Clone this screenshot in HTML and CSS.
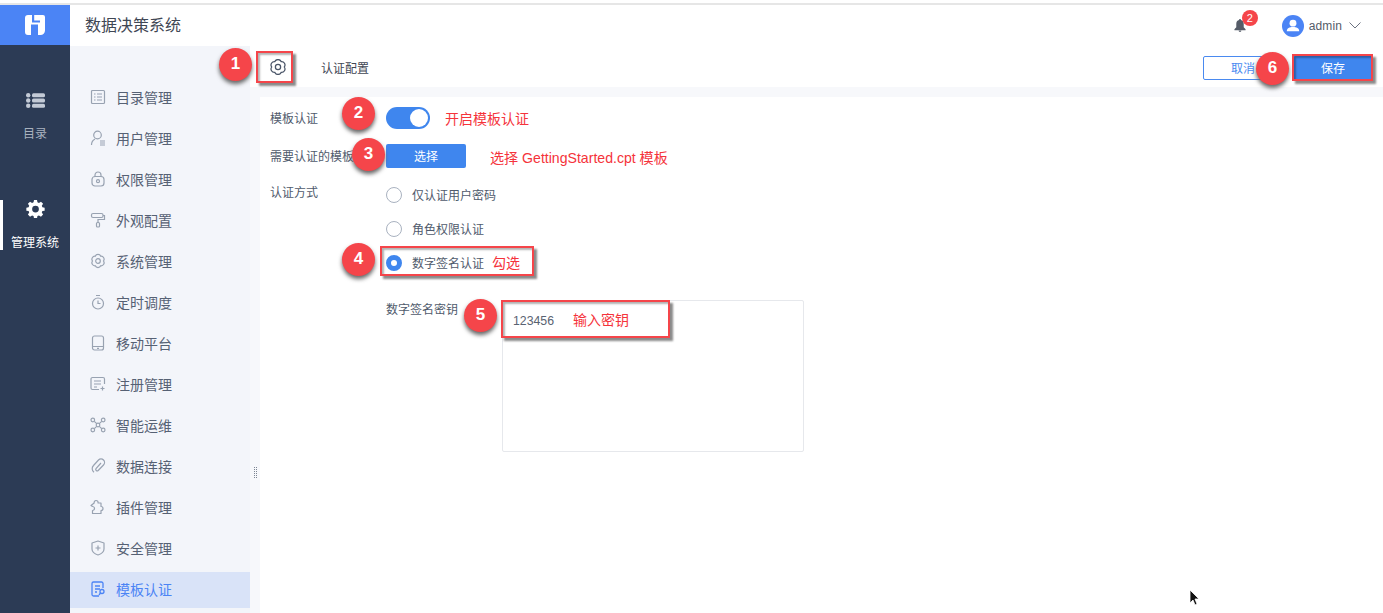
FILE: index.html
```html
<!DOCTYPE html>
<html lang="zh-CN">
<head>
  <meta charset="UTF-8" />
  <title>数据决策系统</title>
  <link rel="stylesheet" href="styles.css">
</head>
<body>
  <div class="topline"></div>
  <div class="app">
    <aside class="rail">
      <div class="logo">
        <svg width="20" height="20" viewBox="0 0 20 20"><path fill="#fff" d="M3 0h15a2 2 0 0 1 2 2v13.500a4.500 4.500 0 0 1-4.500 4.500H13V9.500H6V20H3a3 3 0 0 1-3-3V3a3 3 0 0 1 3-3z"/><path fill="#4b84f5" d="M7 0h2.200v5.500H15v2H7z"/></svg>
      </div>
      <div class="rail-item rail-dir">
        <svg width="19" height="15" viewBox="0 0 19 15" fill="#c3cad6"><circle cx="2.200" cy="2.200" r="2.200"/><circle cx="2.200" cy="7.500" r="2.200"/><circle cx="2.200" cy="12.800" r="2.200"/><rect x="6" y="0.300" width="13" height="4" rx="1.500"/><rect x="6" y="5.500" width="13" height="4" rx="1.500"/><rect x="6" y="10.700" width="13" height="4" rx="1.500"/></svg>
        <span>目录</span>
      </div>
      <div class="rail-item rail-on">
        <svg width="21" height="20" viewBox="0 0 24 24"><path fill="#fff" fill-rule="evenodd" d="M10 0h4l.6 3.100 2 .8L19.300 2.200l2.800 2.800-1.700 2.600.8 2 3 .6v4l-3 .6-.8 2 1.700 2.600-2.800 2.800-2.700-1.700-2 .8-.6 3.100h-4l-.6-3.100-2-.8-2.700 1.700-2.800-2.800 1.700-2.600-.8-2-3-.6v-4l3-.6.8-2L1.900 5 4.700 2.200l2.700 1.700 2-.8zM12 7.500a4.500 4.500 0 1 0 0 9 4.500 4.500 0 0 0 0-9z"/></svg>
        <span>管理系统</span>
      </div>
    </aside>

    <div class="right">
      <header class="header">
        <div class="title">数据决策系统</div>
        <div class="bell">
          <svg width="12" height="13" viewBox="0 0 12 14" fill="#555c68"><path d="M6 0c.7 0 1 .5 1 1 2 .5 3 2 3 4v4l2 2v1H0v-1l2-2V5c0-2 1-3.500 3-4 0-.5.300-1 1-1z"/><path d="M4.500 12.500h3a1.500 1.500 0 0 1-3 0z"/></svg>
          <span class="bell-count">2</span>
        </div>
        <div class="user">
          <svg width="22" height="22" viewBox="0 0 23 23"><circle cx="11.500" cy="11.500" r="11.500" fill="#4b84f5"/><circle cx="11.500" cy="8.500" r="3.600" fill="#fff"/><path fill="#fff" d="M5 17c0-3.500 2.800-4.500 6.500-4.500S18 13.500 18 17z"/></svg>
          <span class="user-name">admin</span>
          <svg width="12" height="7" viewBox="0 0 12 7" fill="none" stroke="#6b7280"><path d="M.5.500 6 6l5.500-5.500"/></svg>
        </div>
      </header>

      <div class="body">
        <nav class="side">
          <a class="side-item"><svg class="ico" viewBox="0 0 16 16"><rect x="1.500" y="1.500" width="13" height="13" rx="1"/><path d="M4 5h1.500M7 5h5M4 8h1.500M7 8h5M4 11h1.500M7 11h5"/></svg>目录管理</a>
          <a class="side-item"><svg class="ico" viewBox="0 0 16 16"><circle cx="7.500" cy="5" r="3.800"/><path d="M1.500 15c0-3 1.500-5 3.500-6M10 11h5M10 13h5M10 15h5"/></svg>用户管理</a>
          <a class="side-item"><svg class="ico" viewBox="0 0 16 16"><rect x="2" y="5.500" width="12" height="9.500" rx="3"/><path d="M5 5.500V4a3 3 0 0 1 6 0v1.500"/><circle cx="8" cy="10.200" r="1.500"/></svg>权限管理</a>
          <a class="side-item"><svg class="ico" viewBox="0 0 16 16"><rect x="1.500" y="1.500" width="11.500" height="4" rx="1.500"/><path d="M13 3.500h1.500v4H8v3"/><rect x="6.500" y="10.500" width="3" height="4.500" rx="1"/></svg>外观配置</a>
          <a class="side-item"><svg class="ico" viewBox="0 0 16 16"><path d="M13.500 8A3 3 0 0 1 10.750 12.760 3 3 0 0 1 5.250 12.760 3 3 0 0 1 2.500 8 3 3 0 0 1 5.250 3.240 3 3 0 0 1 10.750 3.240 3 3 0 0 1 13.500 8z"/><circle cx="8" cy="8" r="2.300"/></svg>系统管理</a>
          <a class="side-item"><svg class="ico" viewBox="0 0 16 16"><circle cx="8" cy="9.500" r="5.500"/><path d="M6 1.500h4M8 6.500v3h2.500"/></svg>定时调度</a>
          <a class="side-item"><svg class="ico" viewBox="0 0 16 16"><rect x="2.500" y="1" width="11" height="14" rx="2"/><path d="M2.500 11.500h11M7 13.300h2"/></svg>移动平台</a>
          <a class="side-item"><svg class="ico" viewBox="0 0 16 16"><path d="M14.500 8V3A1.500 1.500 0 0 0 13 1.500H2.500A1.500 1.500 0 0 0 1 3v9a1.500 1.500 0 0 0 1.500 1.500H9M4 5h7M4 8h7M4 11h3M12.500 10.500v4M10.500 12.500h4"/></svg>注册管理</a>
          <a class="side-item"><svg class="ico" viewBox="0 0 16 16"><circle cx="2.800" cy="3" r="1.800"/><circle cx="13.200" cy="3" r="1.800"/><circle cx="2.800" cy="13" r="1.800"/><circle cx="13.200" cy="13" r="1.800"/><circle cx="8" cy="8" r="1.800"/><path d="M4.300 4.300l2.400 2.400M11.700 4.300L9.300 6.700M4.300 11.700l2.400-2.400M11.700 11.700L9.300 9.300"/></svg>智能运维</a>
          <a class="side-item"><svg class="ico" viewBox="0 0 16 16"><path d="M11 5L6 10.500a1.500 1.500 0 0 0 2.200 2L13.500 7a3.500 3.500 0 0 0-5-5L3.500 7.500a4.500 4.500 0 0 0 .5 6.800"/></svg>数据连接</a>
          <a class="side-item"><svg class="ico" viewBox="0 0 16 16"><path d="M6 1.500a2 2 0 0 1 2 2.500h3v3.500a2 2 0 1 1 0 4V14.500H2.500v-3a2 2 0 1 0 0-4L1 6.500 4.200 4A2 2 0 0 1 6 1.500z" stroke-linejoin="round"/></svg>插件管理</a>
          <a class="side-item"><svg class="ico" viewBox="0 0 16 16"><path d="M8 1l6 2v6c0 3-3 5-6 6-3-1-6-3-6-6V3z" stroke-linejoin="round"/><path d="M8 5.500v5M5.500 8h5"/></svg>安全管理</a>
          <a class="side-item side-on"><svg class="ico" viewBox="0 0 16 16"><path d="M13 7V2.500A1.500 1.500 0 0 0 11.500 1h-8A1.500 1.500 0 0 0 2 2.500v11A1.500 1.500 0 0 0 3.500 15H9M5 5h5M5 8h5M5 11h2"/><circle cx="12" cy="10.500" r="2"/><path d="M10.500 12l-1.500 2"/></svg>模板认证</a>
        </nav>

        <div class="gutter"><span class="grip"></span></div>

        <section class="page">
          <div class="toolbar">
            <span class="tool-gear">
              <svg width="16" height="16" viewBox="1 1 14 14" fill="none" stroke="#4a5568" stroke-width="1.100"><path d="M13.500 8A3 3 0 0 1 10.750 12.760 3 3 0 0 1 5.250 12.760 3 3 0 0 1 2.500 8 3 3 0 0 1 5.250 3.240 3 3 0 0 1 10.750 3.240 3 3 0 0 1 13.500 8z"/><circle cx="8" cy="8" r="2.300"/></svg>
            </span>
            <span class="tool-title">认证配置</span>
            <div class="tool-btns">
              <button class="btn-cancel">取消</button>
              <button class="btn-save">保存</button>
            </div>
          </div>

          <div class="panel">
            <div class="row row-switch">
              <label class="row-label">模板认证</label>
              <span class="switch"><i></i></span>
              <span class="note note-switch">开启模板认证</span>
            </div>
            <div class="row row-choose">
              <label class="row-label">需要认证的模板</label>
              <button class="btn-choose">选择</button>
              <span class="note note-choose">选择 GettingStarted.cpt 模板</span>
            </div>
            <div class="row row-mode">
              <label class="row-label">认证方式</label>
              <div class="radios">
                <div class="radio-row"><span class="radio"></span>仅认证用户密码</div>
                <div class="radio-row"><span class="radio"></span>角色权限认证</div>
                <div class="radio-row"><span class="radio radio-on"></span>数字签名认证<span class="note note-radio">勾选</span></div>
              </div>
            </div>
            <div class="row row-key">
              <label class="key-label">数字签名密钥</label>
              <div class="key-box">123456<span class="note note-key">输入密钥</span></div>
            </div>
          </div>
        </section>
      </div>
    </div>
  </div>

  <!-- annotations drawn over the screenshot -->
  <span class="mark mark-gear"></span>
  <span class="mark mark-save"></span>
  <span class="mark mark-radio"></span>
  <span class="mark mark-key"></span>
  <span class="num num-1">1</span>
  <span class="num num-2">2</span>
  <span class="num num-3">3</span>
  <span class="num num-4">4</span>
  <span class="num num-5">5</span>
  <span class="num num-6">6</span>

  <svg class="cursor" width="11" height="17" viewBox="0 0 11 17"><path fill="#111" stroke="#fff" stroke-width=".8" d="M1 1v13l3-3 2 5 2-1-2-5h4z"/></svg>
</body>
</html>
```

FILE: styles.css
```css
* {
  box-sizing: border-box;
}
html, body {
  margin: 0;
  height: 613px;
  overflow: hidden;
}
body {
  background: #f7f8fb;
  color: #4f5a6c;
  font-family: "Noto Sans CJK SC", "Liberation Sans", sans-serif;
  font-size: 12px;
}
.topline {
  height: 5px;
  background: #fff;
  border-bottom: 2px solid #e6e6e6;
}
.app {
  display: flex;
  height: 608px;
}

/* left dark rail */
.rail {
  width: 70px;
  flex: none;
  background: #2c3b55;
}
.logo {
  height: 40px;
  background: #4b84f5;
  display: flex;
  align-items: center;
  justify-content: center;
}
.rail-item {
  display: flex;
  flex-direction: column;
  align-items: center;
  color: #aab2bf;
  line-height: 17px;
}
.rail-dir {
  margin-top: 48px;
  gap: 16px;
}
.rail-on {
  margin-top: 59px;
  height: 50px;
  color: #fff;
  gap: 15px;
  border-left: 3px solid #fff;
  padding-right: 3px;
}

.right {
  flex: 1;
  display: flex;
  flex-direction: column;
  min-width: 0;
}
.header {
  height: 41px;
  background: #fff;
  display: flex;
  align-items: center;
  padding: 0 22px 0 15px;
}
.title {
  font-size: 16px;
  color: #3f4754;
  flex: 1;
  padding-bottom: 3px;
}
.bell {
  position: relative;
  display: flex;
  margin-right: 36px;
}
.bell-count {
  position: absolute;
  left: 8px;
  top: -9px;
  width: 16px;
  height: 16px;
  border-radius: 50%;
  background: #f5454a;
  color: #fff;
  font-size: 11px;
  line-height: 16px;
  text-align: center;
  font-family: "Liberation Sans", sans-serif;
}
.user {
  display: flex;
  align-items: center;
}
.user-name {
  font-family: "Liberation Sans", sans-serif;
  font-size: 12px;
  letter-spacing: 0.100px;
  color: #555c68;
  margin: 0 7px 0 5px;
}

.body {
  flex: 1;
  display: flex;
  min-height: 0;
}
.side {
  width: 180px;
  flex: none;
  padding-top: 34px;
  background: #f3f5fa;
}
.side-item {
  display: flex;
  align-items: center;
  height: 36px;
  margin-bottom: 5px;
  padding: 0 0 2px 20px;
  gap: 10px;
  font-size: 14px;
  color: #566174;
}
.ico {
  width: 16px;
  height: 16px;
  flex: none;
  fill: none;
  stroke: #98a2b1;
  stroke-width: 1.200;
}
.side-on {
  background: #d9e3f8;
  color: #4b84f5;
}
.side-on .ico {
  stroke: #4b84f5;
  stroke-width: 1.300;
}
.gutter {
  position: relative;
  width: 0;
}
.grip {
  position: absolute;
  left: 3px;
  top: 421px;
  width: 5px;
  height: 12px;
  background: conic-gradient(#7c8593 25%, transparent 0) 0 0 / 2px 2px;
}

.page {
  flex: 1;
  min-width: 0;
  display: flex;
  flex-direction: column;
}
.toolbar {
  height: 41px;
  background: #fff;
  display: flex;
  align-items: center;
  padding: 3px 10px 0 0;
}
.tool-gear {
  width: 42px;
  padding-left: 20px;
  display: flex;
  margin-top: -2px;
}
.tool-title {
  margin-left: 29px;
  color: #3f4754;
  flex: 1;
  padding-bottom: 2px;
}
.tool-btns {
  display: flex;
  gap: 10px;
}
.tool-btns button {
  width: 80px;
  height: 24px;
  border-radius: 2px;
  font-family: inherit;
  font-size: 12px;
  padding: 0 0 2px;
}
.btn-cancel {
  background: #fff;
  border: 1px solid #4a8af0;
  color: #4a8af0;
}
.btn-save {
  background: #3f86ee;
  border: 1px solid #3f86ee;
  color: #fff;
}

.panel {
  flex: 1;
  margin: 10px 0 0 10px;
  background: #fff;
  padding: 0 10px;
}
.row {
  display: flex;
  align-items: center;
}
.row-label {
  width: 116px;
  flex: none;
  color: #4f5a6c;
  white-space: nowrap;
  padding-bottom: 1px;
}
.row-switch {
  height: 42px;
}
.switch {
  width: 44px;
  height: 22px;
  border-radius: 11px;
  background: #3f86ee;
  display: flex;
  justify-content: flex-end;
  align-items: center;
  padding-right: 2px;
}
.switch i {
  width: 18px;
  height: 18px;
  border-radius: 50%;
  background: #fff;
}
.note {
  color: #f5333b;
  font-size: 14px;
}
.note-switch {
  margin-left: 15px;
}
.row-choose {
  height: 34px;
}
.btn-choose {
  width: 80px;
  height: 24px;
  border: 0;
  border-radius: 2px;
  background: #3f86ee;
  color: #fff;
  font-family: inherit;
  font-size: 12px;
  padding: 0 0 2px;
}
.note-choose {
  margin: 2px 0 0 24px;
  font-size: 14.100px;
  font-family: "Liberation Sans", "Noto Sans CJK SC", sans-serif;
}
.row-mode {
  align-items: flex-start;
  margin-top: 10px;
  height: 110px;
}
.row-mode .row-label {
  line-height: 17px;
}
.radios {
  display: flex;
  flex-direction: column;
  margin-top: -5px;
}
.radio-row {
  display: flex;
  align-items: center;
  height: 34px;
  padding-bottom: 2px;
}
.radio {
  width: 16px;
  height: 16px;
  border-radius: 50%;
  border: 1px solid #a9b2c0;
  margin: 2px 10px 0 0;
}
.radio-on {
  border: 5px solid #3f86ee;
}
.note-radio {
  margin-left: 8px;
}
.row-key {
  align-items: flex-start;
  padding-left: 116px;
  margin-top: 7px;
}
.key-label {
  width: 116px;
  flex: none;
  line-height: 17px;
}
.key-box {
  width: 302px;
  height: 152px;
  border: 1px solid #e6e8ec;
  border-radius: 2px;
  padding: 8px 10px;
  font-family: "Liberation Sans", sans-serif;
  font-size: 12.300px;
  color: #5a6372;
}
.note-key {
  margin-left: 19px;
  font-family: "Noto Sans CJK SC", sans-serif;
}

/* red highlight boxes and numbered balloons */
.mark {
  position: absolute;
  border: 2px solid #f5454a;
  box-shadow: 3px 3px 2px #8a8a8a, inset 2px 2px 2px rgba(0, 0, 0, 0.3);
}
.mark-gear { left: 256px; top: 51px; width: 37px; height: 32px; }
.mark-save { left: 1292px; top: 54px; width: 81px; height: 27px; }
.mark-radio { left: 380px; top: 246px; width: 154px; height: 30px; }
.mark-key { left: 501px; top: 300px; width: 169px; height: 38px; }
.num {
  position: absolute;
  width: 33px;
  height: 33px;
  border-radius: 50%;
  background: #f5454a;
  color: #fff;
  font: bold 17px/31px "Liberation Sans", sans-serif;
  text-align: center;
  box-shadow: 0 3px 4px #666;
}
.num-1 { left: 219px; top: 48px; }
.num-2 { left: 342px; top: 97px; }
.num-3 { left: 352px; top: 138px; }
.num-4 { left: 342px; top: 243px; }
.num-5 { left: 464px; top: 299px; }
.num-6 { left: 1256px; top: 52px; }
.cursor {
  position: absolute;
  left: 1189px;
  top: 589px;
}
```
